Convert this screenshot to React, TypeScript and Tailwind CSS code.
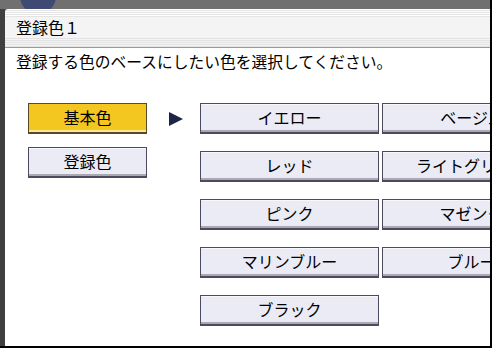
import React from "react";

const font = { fontFamily: '"Noto Sans CJK JP", "Noto Sans", sans-serif' };

function ColorButton({ label }: { label: string }) {
  return (
    <div className="h-[31px] w-[179px] shrink-0 border border-b-2 border-[#4b4a5e] bg-[#ebebf5] shadow-[inset_0_-2px_0_#a9a9b3,inset_0_1px_0_#f7f7fc] flex items-center justify-center text-[16px] leading-[16px] text-black pb-[2px]">
      {label}
    </div>
  );
}

export default function App() {
  const rows: [string, string | null][] = [
    ["イエロー", "ベージュ"],
    ["レッド", "ライトグリーン"],
    ["ピンク", "マゼンタ"],
    ["マリンブルー", "ブルー"],
    ["ブラック", null],
  ];
  return (
    <div
      className="relative w-[492px] h-[348px] overflow-hidden bg-[#707070] border-r-2 border-b-2 border-black flex flex-col"
      style={font}
    >
      <div className="absolute left-[20px] top-[-22px] w-[36px] h-[36px] rounded-full bg-[#3e4a74]" />
      <div className="h-[9px] shrink-0" />
      <div className="flex flex-1 min-h-0">
        <div className="w-[5px] shrink-0 bg-[#3f3f3f]" />
        <div className="relative flex-1 min-w-0 bg-white rounded-tl-[4px] overflow-hidden flex flex-col">
          {/* title bar */}
          <div className="flex flex-col border-b border-[#9a9a9a] shrink-0">
            <div className="h-[8px] bg-[repeating-linear-gradient(to_bottom,#ffffff_0px,#ffffff_1px,#e4e4e4_1px,#e4e4e4_2px)]" />
            <div className="h-[20px] bg-[#f4f4f4] flex items-center pl-[11px] text-[16px] leading-[16px] text-black">
              登録色１
            </div>
            <div className="h-[10px] bg-[repeating-linear-gradient(to_bottom,#f4f4f4_0px,#f4f4f4_1px,#e2e2e2_1px,#e2e2e2_2px)]" />
          </div>
          {/* prompt */}
          <div className="mt-[6px] pl-[11px] text-[15.75px] leading-[16px] text-black whitespace-nowrap">
            登録する色のベースにしたい色を選択してください。
          </div>
          {/* body */}
          <div className="mt-[33px] flex pl-[23px]">
            <div className="flex flex-col gap-[13px] w-[119px] shrink-0">
              <div className="h-[31px] border border-b-2 border-[#5a4a2a] bg-[#f4c620] shadow-[inset_0_-2px_0_#fbe98f] flex items-center justify-center text-[16px] leading-[16px] text-black pb-[2px]">
                基本色
              </div>
              <div className="h-[31px] border border-b-2 border-[#4b4a5e] bg-[#ebebf5] shadow-[inset_0_-2px_0_#a9a9b3,inset_0_1px_0_#f7f7fc] flex items-center justify-center text-[16px] leading-[16px] text-black pb-[2px]">
                登録色
              </div>
            </div>
            <div className="ml-[22px] mt-[9px] w-[14px] shrink-0">
              <svg width="14" height="14" viewBox="0 0 14 14">
                <polygon points="0,0 14,7 0,14" fill="#1c2548" />
              </svg>
            </div>
            <div className="ml-[17px] flex flex-col gap-[17px]">
              {rows.map(([a, b]) => (
                <div key={a} className="flex gap-[3px]">
                  <ColorButton label={a} />
                  {b && <ColorButton label={b} />}
                </div>
              ))}
            </div>
          </div>
        </div>
      </div>
    </div>
  );
}
